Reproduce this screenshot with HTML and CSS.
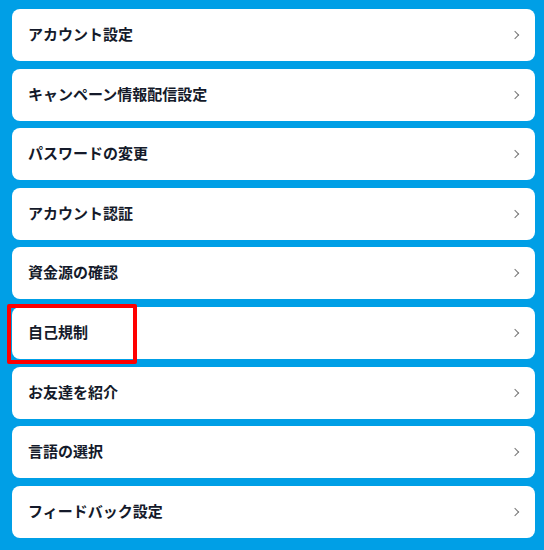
FILE: index.html
```html
<!DOCTYPE html>
<html>
	<head>
		<meta charset="utf-8">
		<link rel="stylesheet" href="styles.css">
	</head>
	<body>
		<div class="menu">
			<div class="item"><span>アカウント設定</span><i class="chev"></i></div>
			<div class="item"><span>キャンペーン情報配信設定</span><i class="chev"></i></div>
			<div class="item"><span>パスワードの変更</span><i class="chev"></i></div>
			<div class="item"><span>アカウント認証</span><i class="chev"></i></div>
			<div class="item"><span>資金源の確認</span><i class="chev"></i></div>
			<div class="item marked"><span>自己規制</span><i class="chev"></i><div class="mark"></div></div>
			<div class="item"><span>お友達を紹介</span><i class="chev"></i></div>
			<div class="item"><span>言語の選択</span><i class="chev"></i></div>
			<div class="item"><span>フィードバック設定</span><i class="chev"></i></div>
		</div>
	</body>
</html>
```

FILE: styles.css
```css
*{
	margin: 0;
	padding: 0;
	box-sizing: border-box;
}
html, body{
	height: 100%;
	background-color: #009fe6;
}
body{
	padding: 9px 9px 0 12px;
	font-family: "Noto Sans CJK JP", "Noto Sans", sans-serif;
}
.menu{
	display: flex;
	flex-direction: column;
	gap: 7.6px;
}
.item{
	position: relative;
	display: flex;
	justify-content: space-between;
	align-items: center;
	height: 52px;
	padding: 0 17px 3px 16px;
	background-color: #fff;
	border-radius: 8px;
	font-size: 15px;
	font-weight: bold;
	line-height: 1;
	color: #141a2a;
}
.chev{
	width: 6px;
	height: 6px;
	margin-top: 3px;
	border-right: 1px solid #777;
	border-top: 1px solid #777;
	transform: rotate(45deg);
}
.mark{
	position: absolute;
	left: -5px;
	top: -3px;
	width: 130px;
	height: 60px;
	border: 4px solid #ff0000;
	border-radius: 2px;
}
```
